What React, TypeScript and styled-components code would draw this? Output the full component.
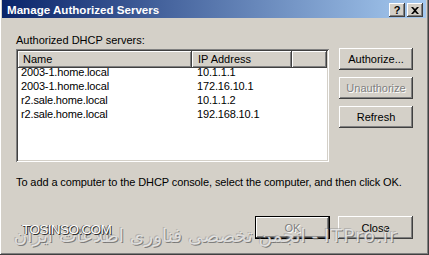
import * as React from "react";
import styled, { createGlobalStyle, css } from "styled-components";

const GlobalStyle = createGlobalStyle`
  html, body {
    margin: 0;
    padding: 0;
    background: #d4d0c8;
  }
  * {
    box-sizing: border-box;
  }
`;

const raised = css`
  box-shadow: inset -1px -1px #404040, inset 1px 1px #ffffff,
    inset -2px -2px #808080, inset 2px 2px #d4d0c8;
`;

const Window = styled.div`
  position: relative;
  width: 429px;
  height: 255px;
  background: #d4d0c8;
  padding: 0 3px 3px 2px;
  box-shadow: inset -1px -1px #404040, inset 1px 0 #ffffff,
    inset -2px -2px #808080;
  font-family: "Liberation Sans", Arial, sans-serif;
  font-size: 11px;
  color: #000;
  overflow: hidden;
`;

const TitleBar = styled.div`
  height: 18px;
  display: flex;
  align-items: center;
  justify-content: space-between;
  padding: 0 3px 0 5px;
  background: linear-gradient(to right, #0a246a, #a6caf0);
`;

const Title = styled.span`
  color: #fff;
  font-weight: bold;
  font-size: 11.6px;
`;

const CaptionButtons = styled.div`
  display: flex;
  gap: 2px;
  margin-top: 2px;
`;

const CaptionButton = styled.div`
  width: 16px;
  height: 14px;
  background: #d4d0c8;
  display: flex;
  align-items: center;
  justify-content: center;
  font-weight: bold;
  font-size: 11px;
  ${raised}
`;

const Body = styled.div`
  padding: 16px 13px 0 14px;
`;

const Label = styled.div`
  height: 13px;
  line-height: 13px;
`;

const MainRow = styled.div`
  display: flex;
  gap: 10px;
  margin-top: 1px;
`;

const ListView = styled.div`
  margin-top: 1px;
  width: 313px;
  height: 113px;
  background: #fff;
  padding: 2px;
  box-shadow: inset 1px 1px #808080, inset -1px -1px #ffffff,
    inset 2px 2px #404040, inset -2px -2px #d4d0c8;
`;

const Grid = styled.div`
  display: grid;
  grid-template-columns: 174px 100px 35px;
  grid-auto-rows: 14px;
`;

const HeaderCell = styled.div<{ $pad: number }>`
  height: 17px;
  line-height: 17px;
  padding-left: ${(p) => p.$pad}px;
  background: #d4d0c8;
  ${raised}
`;

const Cell = styled.div<{ $pad: number }>`
  line-height: 14px;
  padding-left: ${(p) => p.$pad}px;
  white-space: nowrap;
  letter-spacing: -0.15px;
`;

const SideButtons = styled.div`
  display: flex;
  flex-direction: column;
  gap: 7px;
`;

const Button = styled.div<{ $disabled?: boolean; $default?: boolean; $w?: number; $h?: number }>`
  width: ${(p) => p.$w ?? 74}px;
  height: ${(p) => p.$h ?? 22}px;
  display: flex;
  align-items: center;
  justify-content: center;
  background: #d4d0c8;
  ${raised}
  ${(p) =>
    p.$default &&
    css`
      box-shadow: inset 0 0 0 1px #000000, inset -2px -2px #404040,
        inset 2px 2px #ffffff, inset -3px -3px #808080;
    `}
  ${(p) =>
    p.$disabled &&
    css`
      color: #808080;
      text-shadow: 1px 1px #ffffff;
    `}
`;

const Hint = styled.div`
  margin-top: 14px;
  height: 13px;
  line-height: 13px;
  white-space: nowrap;
  letter-spacing: -0.1px;
`;

const Footer = styled.div`
  display: flex;
  justify-content: flex-end;
  gap: 8px;
  margin-top: 27px;
`;

const Watermark = styled.div`
  position: absolute;
  left: 22px;
  bottom: 2px;
  width: 380px;
  height: 32px;
  pointer-events: none;
`;

const SiteMark = styled.div`
  position: absolute;
  left: 0;
  top: 1px;
  font-family: "Liberation Sans", Arial, sans-serif;
  font-size: 13.5px;
  color: #ffffff;
  text-shadow: 1px 1px 0 #303030, -1px 0 0 #606060;
  letter-spacing: -0.6px;
`;

const ForumMark = styled.div`
  position: absolute;
  right: 4px;
  top: 4px;
  font-family: "DejaVu Sans", sans-serif;
  font-size: 18.5px;
  white-space: nowrap;
  color: rgba(235, 235, 235, 0.85);
  text-shadow: 1px 1px 0 rgba(90, 90, 90, 0.7), -1px -1px 0 rgba(150, 150, 150, 0.5);
  letter-spacing: 1.2px;
`;

const rows = [
  ["2003-1.home.local", "10.1.1.1"],
  ["2003-1.home.local", "172.16.10.1"],
  ["r2.sale.home.local", "10.1.1.2"],
  ["r2.sale.home.local", "192.168.10.1"],
];

const CloseGlyph = () => (
  <svg width="8" height="7" viewBox="0 0 8 7">
    <path d="M0 0h2l2 2 2-2h2L5 3.5 8 7H6L4 5 2 7H0l3-3.5z" fill="#000" />
  </svg>
);

export default function App() {
  return (
    <>
      <GlobalStyle />
      <Window>
        <TitleBar>
          <Title>Manage Authorized Servers</Title>
          <CaptionButtons>
            <CaptionButton>?</CaptionButton>
            <CaptionButton>
              <CloseGlyph />
            </CaptionButton>
          </CaptionButtons>
        </TitleBar>
        <Body>
          <Label>Authorized DHCP servers:</Label>
          <MainRow>
            <ListView>
              <Grid>
                <HeaderCell $pad={5}>Name</HeaderCell>
                <HeaderCell $pad={6}>IP Address</HeaderCell>
                <HeaderCell $pad={0} />
                {rows.map(([name, ip]) => (
                  <React.Fragment key={ip}>
                    <Cell $pad={3}>{name}</Cell>
                    <Cell $pad={5}>{ip}</Cell>
                    <Cell $pad={0} />
                  </React.Fragment>
                ))}
              </Grid>
            </ListView>
            <SideButtons>
              <Button>Authorize...</Button>
              <Button $disabled>Unauthorize</Button>
              <Button>Refresh</Button>
            </SideButtons>
          </MainRow>
          <Hint>
            To add a computer to the DHCP console, select the computer, and then click OK.
          </Hint>
          <Footer>
            <Button $default $disabled $w={75} $h={23}>
              OK
            </Button>
            <Button $w={75} $h={23}>
              Close
            </Button>
          </Footer>
        </Body>
        <Watermark>
          <ForumMark>انجمن تخصصی فناوری اطلاعات ایران - ITPro.ir</ForumMark>
          <SiteMark>TOSINSO.COM</SiteMark>
        </Watermark>
      </Window>
    </>
  );
}
